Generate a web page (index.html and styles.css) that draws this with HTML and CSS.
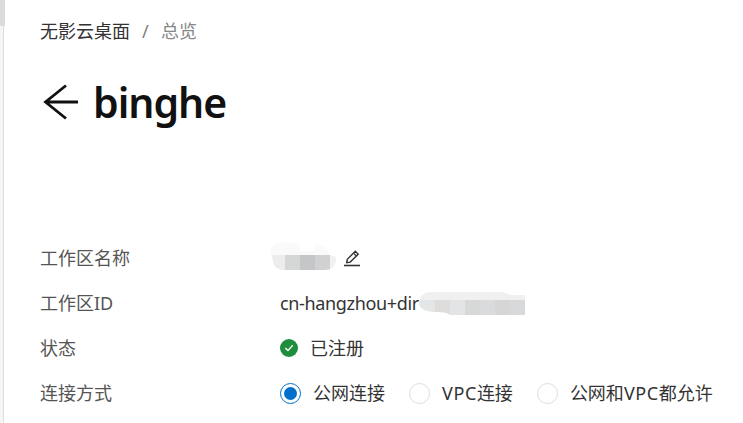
FILE: index.html
```html
<!DOCTYPE html>
<html lang="zh-CN">
<head>
<meta charset="UTF-8">
<meta name="viewport" content="width=device-width, initial-scale=1.0">
<title>无影云桌面</title>
<link rel="stylesheet" href="styles.css">
</head>
<body>
<div class="page">
<div class="sidebar">
<div class="thumb"></div>
<div class="track"></div>
</div>

<main class="content">
<nav class="breadcrumb">
<span>无影云桌面</span>
<span class="separator">/</span>
<span class="current">总览</span>
</nav>

<header class="title">
<svg class="back" width="36" height="36" viewBox="0 0 36 36">
<path d="M35 18H2M23 1.500L2.500 18L23 34.500" fill="none" stroke="#111" stroke-width="2.800"/>
</svg>
<h1>binghe</h1>
</header>

<div class="info">
<div class="row">
<div class="label">工作区名称</div>
<div class="value">
<svg class="mask-name" width="65" height="28" viewBox="0 0 65 28">
<clipPath id="nameShape"><path d="M5 1Q15 -1 29 2V9H44V2Q54 1 59 13L65 15V20Q62 28 54 28H14Q2 28 2 18Q-2 10 1 5Z"/></clipPath>
<g clip-path="url(#nameShape)">
<path fill="#fafafa" d="M0 0H65V13H0z"/>
<path fill="#ececec" d="M0 13H14V28H0z"/>
<path fill="#d5d6d6" d="M14 13H29V28H14z"/>
<path fill="#c5c6c7" d="M29 13H44V28H29z"/>
<path fill="#d1d1d1" d="M44 13H59V28H44z"/>
<path fill="#f1f1f2" d="M59 13H65V28H59z"/>
</g>
</svg>
<svg class="edit" width="16" height="17" viewBox="0 0 16 17">
<path d="M2.700 12.700L3.300 9.300L11.300 1.300L14.200 4.200L6.200 12.100Z" fill="none" stroke="#333" stroke-width="1.400"/>
<path d="M9.500 3.200L12.300 6" stroke="#333" stroke-width="1.200"/>
<path d="M0 15.500H16" stroke="#333" stroke-width="1.600"/>
</svg>
</div>
</div>
<div class="row">
<div class="label">工作区ID</div>
<div class="value">
<span class="id">cn-hangzhou+dir</span>
<svg class="mask-id" width="106" height="23" viewBox="0 0 106 23">
<clipPath id="idShape"><path d="M0 12Q1 1 10 0H81Q89 1 91 3H106V23H31Q28 20 18 20Q2 20 0 12Z"/></clipPath>
<g clip-path="url(#idShape)">
<path fill="#f0f0f0" d="M0 0H106V8H0z"/>
<path fill="#e4e5e6" d="M0 8H16V23H0z"/>
<path fill="#dedddb" d="M16 8H31V23H16z"/>
<path fill="#e3e4e6" d="M31 8H46V23H31z"/>
<path fill="#d7d9d8" d="M46 8H61V23H46z"/>
<path fill="#dadbdc" d="M61 8H76V23H61z"/>
<path fill="#d5d6d5" d="M76 8H91V23H76z"/>
<path fill="#d8d9da" d="M91 8H106V23H91z"/>
</g>
</svg>
</div>
</div>
<div class="row">
<div class="label">状态</div>
<div class="value">
<svg class="status" width="18" height="18" viewBox="0 0 18 18">
<circle cx="9" cy="9" r="9" fill="#1e8e3e"/>
<path d="M5.300 9L8 11.600L12.700 6.300" fill="none" stroke="#fff" stroke-width="1.400"/>
</svg>
<span>已注册</span>
</div>
</div>
<div class="row">
<div class="label">连接方式</div>
<div class="value">
<div class="option"><i class="radio checked"></i><span>公网连接</span></div>
<div class="option"><i class="radio"></i><span><span class="latin">VPC</span>连接</span></div>
<div class="option"><i class="radio"></i><span>公网和<span class="latin">VPC</span>都允许</span></div>
</div>
</div>
</div>
</main>
</div>
</body>
</html>
```
FILE: styles.css
```css
* {
box-sizing: border-box;
}

body {
margin: 0;
background-color: #fff;
color: #333;
font-family: "Noto Sans", "Noto Sans CJK SC", sans-serif;
font-size: 18px;
line-height: 26px;
}

.page {
display: flex;
height: 423px;
overflow: hidden;
}

.sidebar {
display: flex;
flex-direction: column;
width: 5px;
}

.thumb {
height: 26px;
background-color: #dcdcdc;
}

.track {
flex: 1;
width: 4px;
background-color: #f5f5f5;
border-right: 1px solid #ddd;
}

.content {
flex: 1;
padding: 18px 0 0 35px;
white-space: nowrap;
}

.breadcrumb {
display: flex;
}

.separator {
width: 31px;
padding-left: 12px;
color: #808080;
}

.current {
color: #888;
}

.title {
display: flex;
align-items: center;
height: 60px;
margin-top: 28px;
}

.back {
margin: 0 14px 0 3px;
}

h1 {
margin: 0;
color: #111;
font-size: 41px;
font-weight: 600;
line-height: 60px;
letter-spacing: -1px;
}

.info {
margin-top: 104px;
}

.row {
display: flex;
align-items: center;
height: 45px;
}

.label {
width: 240px;
padding-bottom: 2px;
color: #555;
}

.value {
display: flex;
align-items: center;
}

.value span {
padding-bottom: 2px;
}

.mask-name {
margin: -5px 8px 0 -9px;
}

.id {
width: 139px;
letter-spacing: -0.35px;
}

.status {
margin: -2px 12px 0 0;
}

.latin {
letter-spacing: 0.6px;
}

.option {
display: flex;
align-items: center;
margin-right: 24px;
}

.radio {
display: flex;
align-items: center;
justify-content: center;
width: 21px;
height: 21px;
margin-right: 12px;
border: 1px solid #ddd;
border-radius: 50%;
}

.checked {
border-color: #0070cc;
}

.checked::after {
content: "";
width: 13px;
height: 13px;
border-radius: 50%;
background-color: #0070cc;
}
```
